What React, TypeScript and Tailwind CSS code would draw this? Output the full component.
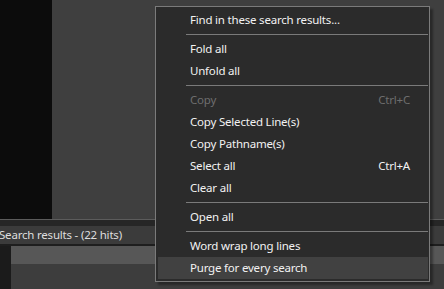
import React from "react";

type Item =
  | { kind: "item"; label: string; shortcut?: string; disabled?: boolean; hover?: boolean }
  | { kind: "sep" };

const items: Item[] = [
  { kind: "item", label: "Find in these search results..." },
  { kind: "sep" },
  { kind: "item", label: "Fold all" },
  { kind: "item", label: "Unfold all" },
  { kind: "sep" },
  { kind: "item", label: "Copy", shortcut: "Ctrl+C", disabled: true },
  { kind: "item", label: "Copy Selected Line(s)" },
  { kind: "item", label: "Copy Pathname(s)" },
  { kind: "item", label: "Select all", shortcut: "Ctrl+A" },
  { kind: "item", label: "Clear all" },
  { kind: "sep" },
  { kind: "item", label: "Open all" },
  { kind: "sep" },
  { kind: "item", label: "Word wrap long lines" },
  { kind: "item", label: "Purge for every search", hover: true },
];

export default function App() {
  return (
    <div
      className="relative w-[444px] h-[289px] overflow-hidden bg-[#3f3f3f] flex flex-col"
      style={{ fontFamily: '"Noto Sans", "Open Sans", sans-serif' }}
    >
      <div className="flex h-[219px] shrink-0">
        <div className="w-[52px] h-full bg-[#0c0c0c]" />
        <div className="flex-1 bg-[#3f3f3f]" />
      </div>
      <div className="h-px bg-[#5c5c5c] shrink-0" />
      <div className="h-[6px] bg-[#262626] shrink-0" />
      <div className="h-[18px] bg-[#3b3b3b] shrink-0 flex items-center -ml-[1px] text-[11.5px] tracking-[-0.2px] leading-none text-[#dedede]">
        Search results - (22 hits)
      </div>
      <div className="h-[2px] bg-[#1e1e1e] shrink-0" />
      <div className="flex flex-1">
        <div className="w-[11px] bg-[#1b1b1b]" />
        <div className="flex-1 flex flex-col">
          <div className="h-[18px] bg-[#575757]" />
          <div className="flex-1 bg-[#3d3d3d]" />
        </div>
      </div>

      <div className="absolute left-[155px] top-[6px] w-[275px] h-[276px] border border-[#7b7b7b] bg-[#2b2b2b] pt-[2px] pl-[2px] pr-[1px] shadow-[3px_3px_2px_rgba(0,0,0,0.35)]">
        {items.map((it, i) =>
          it.kind === "sep" ? (
            <div key={i} className="h-[7px] flex items-center pl-[28px]">
              <div className="h-px w-full bg-[#7a7a7a]" />
            </div>
          ) : (
            <div
              key={i}
              className={`h-[22px] flex items-center pl-[32px] pr-[18px] text-[11.5px] tracking-[-0.2px] leading-none ${
                it.hover ? "bg-[#414141]" : ""
              } ${it.disabled ? "text-[#6e6e6e]" : "text-[#f2f2f2]"}`}
            >
              <span className="flex-1">{it.label}</span>
              {it.shortcut && <span>{it.shortcut}</span>}
            </div>
          )
        )}
      </div>
    </div>
  );
}
